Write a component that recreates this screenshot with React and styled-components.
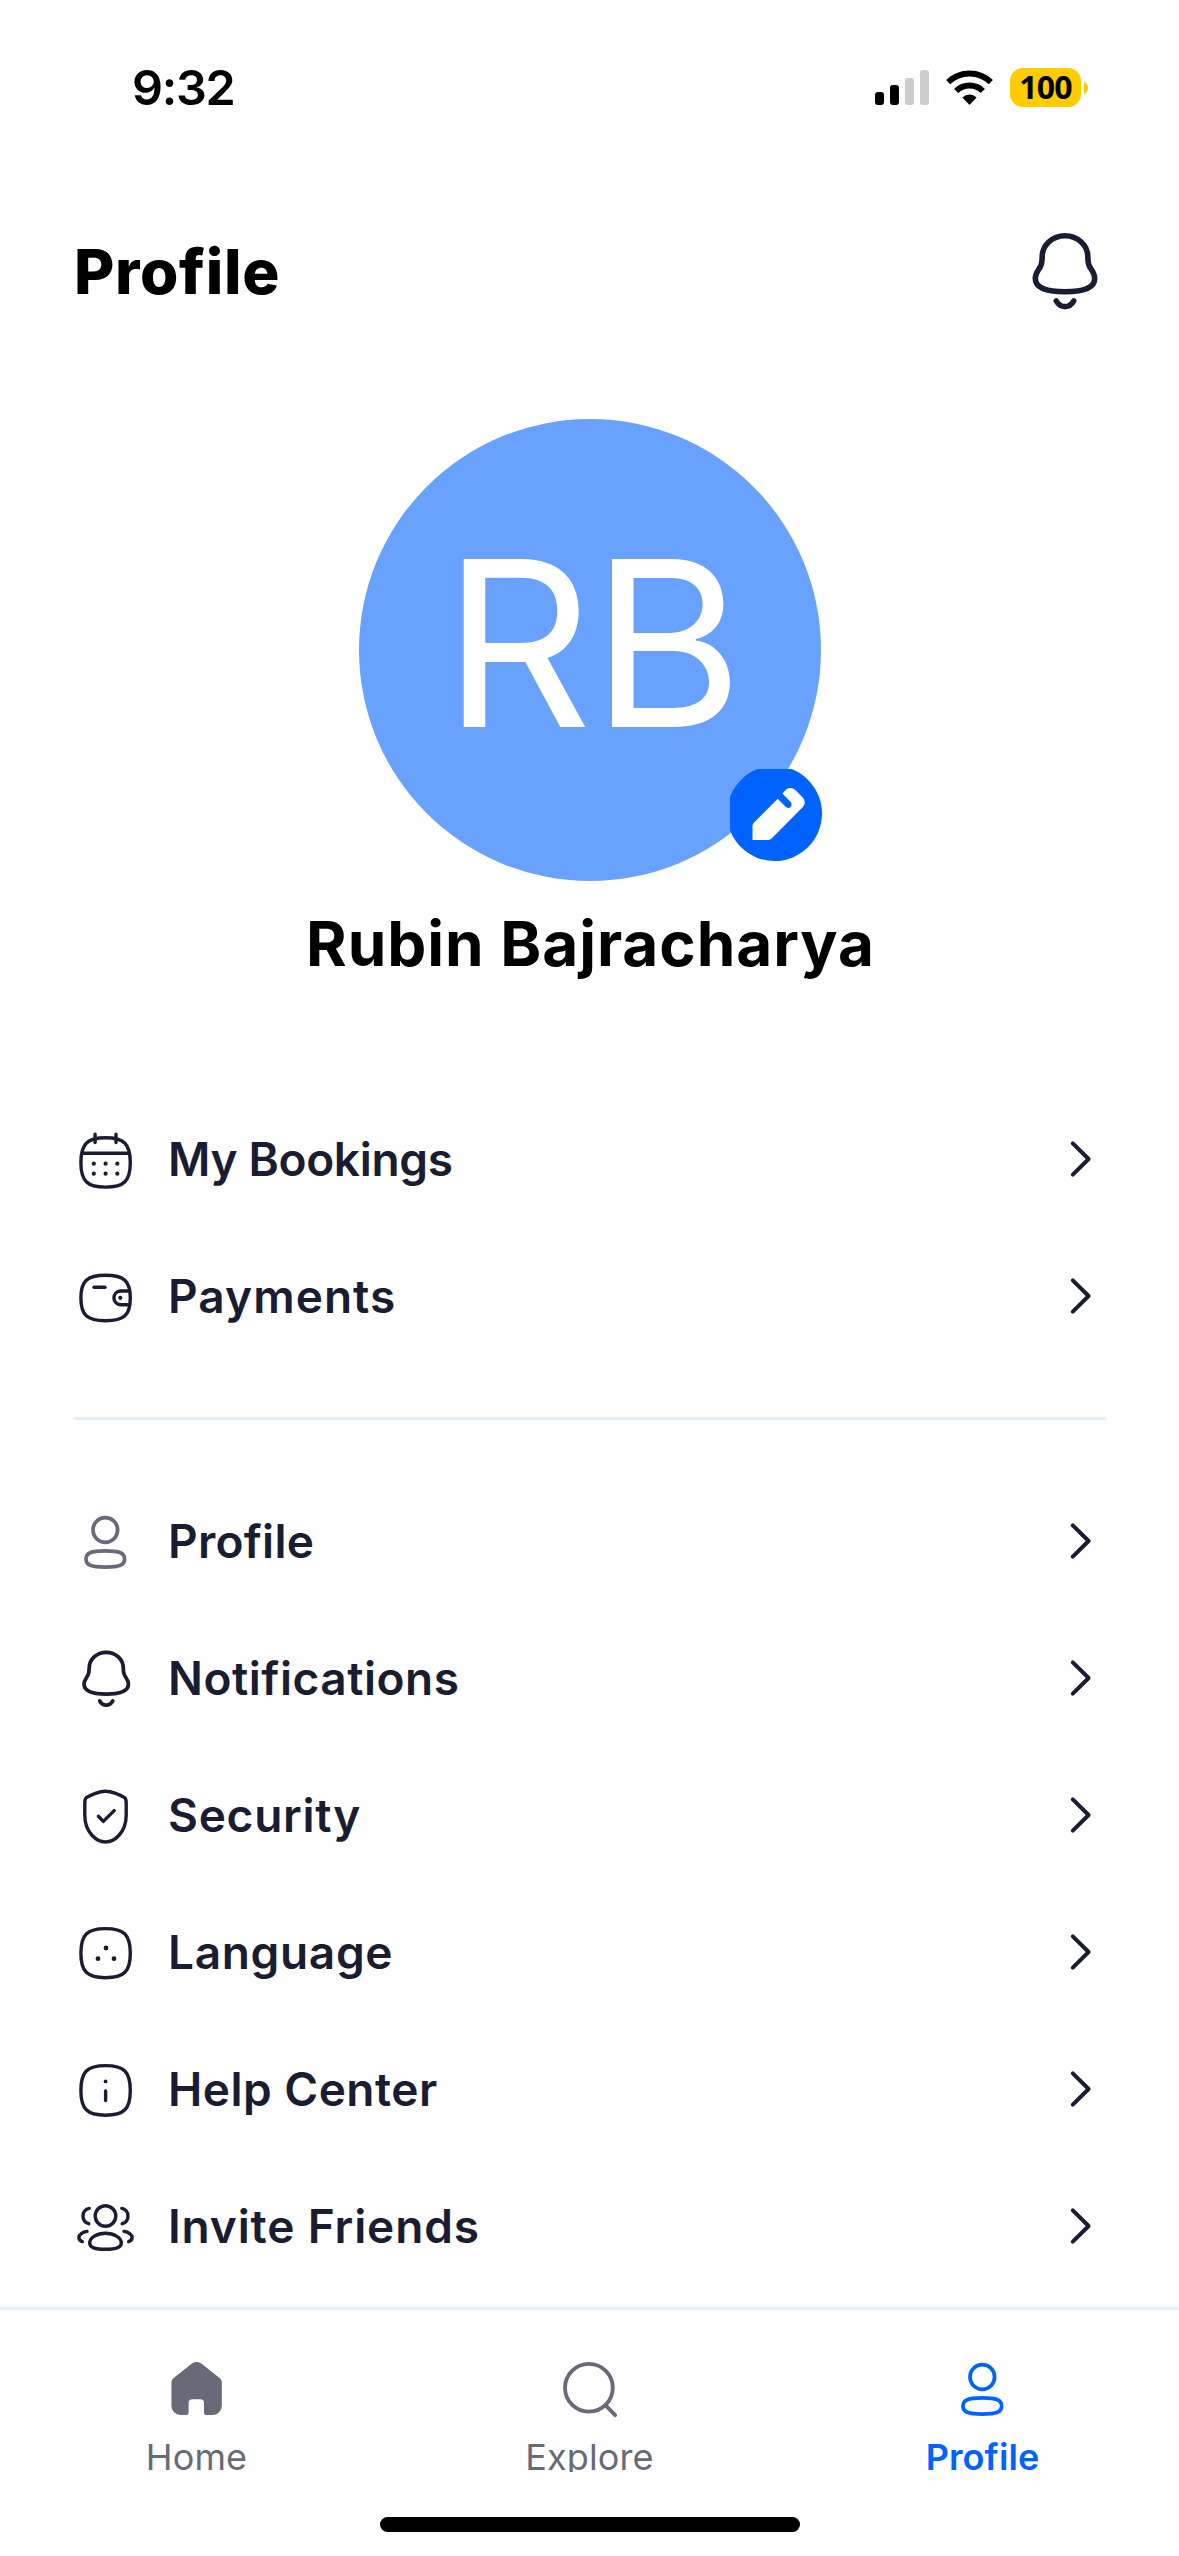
import React from "react";
import styled, { createGlobalStyle } from "styled-components";

const INK = "#1a1d32";
const MUTED = "#686a78";
const BLUE = "#0062ff";
const LINE = "#e3eefd";

const GlobalStyle = createGlobalStyle`
  *, *::before, *::after { box-sizing: border-box; }
  body { margin: 0; background: #fff; }
  svg { display: block; flex: none; }
`;

const Screen = styled.div`
  display: flex;
  flex-direction: column;
  width: 1179px;
  height: 2556px;
  overflow: hidden;
  background: #fefefe;
  font-family: Inter, "Liberation Sans", sans-serif;
  color: ${INK};
`;

const StatusBar = styled.div`
  display: flex;
  align-items: center;
  justify-content: space-between;
  flex: none;
  height: 175px;
  padding: 0 91px 0 132px;
  color: #000;
`;

const Time = styled.div`
  font-size: 48.5px;
  font-weight: 600;
  line-height: 60px;
  letter-spacing: -1.3px;
`;

const StatusIcons = styled.div`
  display: flex;
  align-items: center;
  gap: 17px;
`;

const Signal = styled.div`
  display: flex;
  align-items: flex-end;
  gap: 6px;
  height: 35px;
`;

const SignalBar = styled.span`
  width: 9px;
  height: ${(p) => p.$height}px;
  border-radius: 3px;
  background: ${(p) => (p.$on ? "#000" : "#ccc")};
`;

const Battery = styled.div`
  display: flex;
  align-items: center;
  gap: 3px;
`;

const BatteryLevel = styled.div`
  width: 71px;
  height: 39px;
  border-radius: 13px;
  background: #ffcc00;
  text-align: center;
  font-family: "Open Sans", sans-serif;
  font-size: 32px;
  font-weight: 700;
  line-height: 38px;
  letter-spacing: -0.8px;
`;

const Header = styled.header`
  display: flex;
  align-items: center;
  justify-content: space-between;
  flex: none;
  height: 194px;
  padding: 0 74px;
`;

const Title = styled.h1`
  margin: 0;
  font-size: 62px;
  font-weight: 800;
  line-height: 74px;
  letter-spacing: 0.65px;
  color: #000;
`;

const ProfileSummary = styled.section`
  display: flex;
  flex-direction: column;
  align-items: center;
  gap: 28px;
  padding: 50px 0 112px;
`;

const AvatarFrame = styled.div`
  position: relative;
  width: 462px;
  height: 462px;
`;

const Avatar = styled.div`
  display: flex;
  align-items: center;
  justify-content: center;
  width: 100%;
  height: 100%;
  padding: 0 0 14px 7px;
  border-radius: 50%;
  background: #69a1ff;
  color: #fff;
  font-size: 231px;
  font-weight: 400;
  letter-spacing: -0.5px;
`;

const EditBadge = styled.div`
  position: absolute;
  left: 371px;
  top: 350px;
`;

const Name = styled.h2`
  margin: 0;
  padding-left: 2px;
  font-size: 62px;
  font-weight: 700;
  line-height: 70px;
  letter-spacing: 0.95px;
  color: #000;
`;

const MenuGroup = styled.ul`
  list-style: none;
  margin: 0;
  padding: 0 73px 0 75px;
`;

const MenuRow = styled.li`
  display: flex;
  align-items: center;
  gap: 32px;
  height: 137px;
`;

const MenuLabel = styled.span`
  flex: 1;
  font-size: 46px;
  font-weight: 600;
  line-height: 57px;
  letter-spacing: ${(p) => p.$tracking}px;
`;

const Divider = styled.hr`
  flex: none;
  width: 1032px;
  height: 3px;
  margin: 52px 0 53px 74px;
  border: 0;
  background: ${LINE};
`;

const BottomBar = styled.footer`
  display: flex;
  flex-direction: column;
  align-items: center;
  gap: 37px;
  margin-top: 12px;
  border-top: 3px solid ${LINE};
  padding-top: 48px;
`;

const Tabs = styled.nav`
  display: grid;
  grid-template-columns: repeat(3, 1fr);
  width: 100%;
`;

const Tab = styled.div`
  display: flex;
  flex-direction: column;
  align-items: center;
  gap: 15px;
  color: ${(p) => (p.$active ? BLUE : MUTED)};
`;

const TabLabel = styled.span`
  clip-path: inset(0 0 8px 0);
  font-size: 36px;
  font-weight: ${(p) => (p.$active ? 600 : 400)};
  line-height: 46px;
  letter-spacing: 0.1px;
`;

const HomeIndicator = styled.div`
  width: 420px;
  height: 15px;
  border-radius: 8px;
  background: #000;
`;

const Icon = ({ children, stroke = 3.4, color = "currentColor" }) => (
  <svg
    width="61"
    height="61"
    viewBox="0 0 61 61"
    fill="none"
    stroke={color}
    strokeWidth={stroke}
    strokeLinecap="round"
    strokeLinejoin="round"
  >
    {children}
  </svg>
);

const Dot = ({ x, y, r = 2.1 }) => <circle cx={x} cy={y} r={r} fill="currentColor" stroke="none" />;

// Rounded outline whose four quarters bulge towards the corners of its box.
const squircle = (x0, y0, x1, y1, k = 0.75) => {
  const cx = (x0 + x1) / 2;
  const cy = (y0 + y1) / 2;
  const hx = ((x1 - x0) / 2) * k;
  const hy = ((y1 - y0) / 2) * k;
  return `M${x0} ${cy}C${x0} ${cy - hy} ${cx - hx} ${y0} ${cx} ${y0}S${x1} ${cy - hy} ${x1} ${cy}S${cx + hx} ${y1} ${cx} ${y1}S${x0} ${cy + hy} ${x0} ${cy}Z`;
};

const BELL =
  "M40 10.7C27 10.7 17.3 20.5 17.2 31.5C17.2 37 17.2 38.5 15.2 42C12.8 46 10.3 48.2 10.3 53.5C10.3 62.5 20 66.7 40 66.7S69.7 62.5 69.7 53.5C69.7 48.2 67.2 46 64.8 42C62.8 38.5 62.8 37 62.8 31.5C62.7 20.5 53 10.7 40 10.7Z";
const CLAPPER = "M31.3 76C33.5 80 37 81.6 40 81.6S46.5 80 48.7 76";

const HeaderBell = () => (
  <svg width="80" height="94" viewBox="0 0 80 94" fill="none" stroke={INK} strokeWidth="5.6" strokeLinecap="round">
    <path d={BELL} />
    <path d={CLAPPER} />
  </svg>
);

const BellIcon = () => (
  <Icon stroke={5.1}>
    <g transform="translate(1.4 -3.7) scale(0.746)">
      <path d={BELL} />
      <path d={CLAPPER} />
    </g>
  </Icon>
);

const CalendarIcon = () => (
  <Icon>
    <path d={squircle(5.9, 8.8, 55.3, 58.1)} />
    <path d="M8 24.2H53.5" />
    <path d="M20.1 5.3V13.5M41 5.3V13.5" />
    {[18.8, 30.6, 42.3].map((x) => (
      <React.Fragment key={x}>
        <Dot x={x} y={34.7} />
        <Dot x={x} y={44.7} />
      </React.Fragment>
    ))}
  </Icon>
);

const WalletIcon = () => (
  <Icon>
    <path d={squircle(5.9, 9.2, 55.3, 54.8)} />
    <path d="M19 21.3H30" />
    <path d="M54.6 25H45A6.9 6.9 0 0 0 45 38.7H54.6" />
    <Dot x={45.3} y={31.8} />
  </Icon>
);

const PersonIcon = ({ color }) => (
  <Icon color={color} stroke={3.7}>
    <circle cx="30.3" cy="19" r="12.3" />
    <path d={squircle(11, 39.9, 49.6, 56.1)} />
  </Icon>
);

const ShieldIcon = () => (
  <Icon>
    <path d="M30.5 6.3C24.5 6.3 16 9.7 11.4 12.7C9.8 13.8 9.8 15.5 9.8 18V30C9.8 48 22 57 30.5 57S51.2 48 51.2 30V18C51.2 15.5 51.2 13.8 49.6 12.7C45 9.7 36.5 6.3 30.5 6.3Z" />
    <path d="M23.4 31.3L28.3 36.4L39.2 25.6" />
  </Icon>
);

const LanguageIcon = () => (
  <Icon>
    <path d={squircle(5.9, 6.6, 55.3, 55.7)} />
    <Dot x={31} y={26} r={2.4} />
    <Dot x={23} y={36.7} r={2.4} />
    <Dot x={39} y={36.7} r={2.4} />
  </Icon>
);

const InfoIcon = () => (
  <Icon>
    <path d={squircle(5.9, 6.6, 55.3, 56.2)} />
    <Dot x={30.6} y={22.4} r={1.9} />
    <path d="M30.6 32V41.6" />
  </Icon>
);

const FriendsIcon = () => (
  <Icon>
    <circle cx="30.5" cy="20" r="10.3" />
    <path d="M30.5 37.2C39 37.2 46.3 41.7 46.3 47C46.3 51.6 41 53.3 30.5 53.3S14.7 51.6 14.7 47C14.7 41.7 22 37.2 30.5 37.2Z" />
    <path d="M14.2 12.4C10.8 13 8 16 8 20S10.6 26.8 13.8 27.7" />
    <path d="M46.8 12.4C50.2 13 53 16 53 20S50.4 26.8 47.2 27.7" />
    <path d="M12 35.4C7.5 36 3.9 38.5 3.9 41.5C3.9 43.7 5.3 44.9 7.3 45.6" />
    <path d="M49 35.4C53.5 36 57.1 38.5 57.1 41.5C57.1 43.7 55.7 44.9 53.7 45.6" />
  </Icon>
);

const ChevronIcon = () => (
  <Icon stroke={4}>
    <path d="M27.8 14.4L43.6 30L27.8 45.6" />
  </Icon>
);

const HomeIcon = () => (
  <Icon>
    <path
      fill="currentColor"
      stroke="none"
      d="M25.9 5.6C28.6 3.4 32.6 3.4 35.3 5.6L53.3 19.8C55 21.2 55.8 22.6 55.8 24.6V48A9 9 0 0 1 46.8 57H40.5A2.5 2.5 0 0 1 38 54.5V45A3.7 3.7 0 0 0 34.3 41.3H26.3A3.7 3.7 0 0 0 22.6 45V54.5A2.5 2.5 0 0 1 20.1 57H14.4A9 9 0 0 1 5.4 48V24.6C5.4 22.6 6.2 21.2 7.9 19.8Z"
    />
  </Icon>
);

const SearchIcon = () => (
  <Icon stroke={3.8}>
    <circle cx="29.9" cy="29.8" r="23.9" />
    <path d="M46.6 47.4L56.2 57.2" />
  </Icon>
);

const WifiIcon = () => (
  <svg width="47" height="35" viewBox="0 0 47 35" fill="none" stroke="#000" strokeWidth="6">
    <path d="M2.2 12.2A30.5 30.5 0 0 1 44.8 12.2" />
    <path d="M10.2 21A18.8 18.8 0 0 1 36.8 21" />
    <path fill="#000" stroke="none" d="M16.4 27.4A10.4 10.4 0 0 1 30.6 27.4L24.2 34.3Q23.5 35 22.8 34.3Z" />
  </svg>
);

const BatteryNub = () => (
  <svg width="4" height="12" viewBox="0 0 4 12">
    <path d="M0 0C2.4 1.2 4 3.4 4 6S2.4 10.8 0 12Z" fill="#ffcc00" />
  </svg>
);

const PencilBadge = () => (
  <svg width="92" height="92" viewBox="0 0 92 92">
    <circle cx="44.5" cy="44.5" r="47.5" fill={BLUE} />
    <path
      fill="#fff"
      d="M47.7 29.7L24.6 53C23 54.6 22.5 55.6 22.5 57.5V71H37C39.5 71 40.6 70.5 42.1 69L72.4 38.4C75.5 35.2 75.5 31.6 72.4 28.2L66.4 22C63 18.4 58.6 18 55.4 21.3L52.4 24.5L60.2 32.4C63.8 36.2 59.4 41.6 55.4 37.6Z"
    />
  </svg>
);

const accountItems = [
  { label: "My Bookings", icon: <CalendarIcon />, tracking: -0.33 },
  { label: "Payments", icon: <WalletIcon />, tracking: 1.06 },
];

const settingsItems = [
  { label: "Profile", icon: <PersonIcon color={MUTED} />, tracking: 0.26 },
  { label: "Notifications", icon: <BellIcon />, tracking: 0.52 },
  { label: "Security", icon: <ShieldIcon />, tracking: 0.75 },
  { label: "Language", icon: <LanguageIcon />, tracking: 0.66 },
  { label: "Help Center", icon: <InfoIcon />, tracking: 0.49 },
  { label: "Invite Friends", icon: <FriendsIcon />, tracking: 0.86 },
];

const tabs = [
  { label: "Home", icon: <HomeIcon /> },
  { label: "Explore", icon: <SearchIcon /> },
  { label: "Profile", icon: <PersonIcon />, active: true },
];

const Menu = ({ items }) => (
  <MenuGroup>
    {items.map((item) => (
      <MenuRow key={item.label}>
        {item.icon}
        <MenuLabel $tracking={item.tracking}>{item.label}</MenuLabel>
        <ChevronIcon />
      </MenuRow>
    ))}
  </MenuGroup>
);

export default function App() {
  return (
    <>
      <GlobalStyle />
      <Screen>
        <StatusBar>
          <Time>9:32</Time>
          <StatusIcons>
            <Signal>
              <SignalBar $height={13} $on />
              <SignalBar $height={20} $on />
              <SignalBar $height={27} />
              <SignalBar $height={35} />
            </Signal>
            <WifiIcon />
            <Battery>
              <BatteryLevel>100</BatteryLevel>
              <BatteryNub />
            </Battery>
          </StatusIcons>
        </StatusBar>
        <Header>
          <Title>Profile</Title>
          <HeaderBell />
        </Header>
        <ProfileSummary>
          <AvatarFrame>
            <Avatar>RB</Avatar>
            <EditBadge>
              <PencilBadge />
            </EditBadge>
          </AvatarFrame>
          <Name>Rubin Bajracharya</Name>
        </ProfileSummary>
        <Menu items={accountItems} />
        <Divider />
        <Menu items={settingsItems} />
        <BottomBar>
          <Tabs>
            {tabs.map((tab) => (
              <Tab key={tab.label} $active={tab.active}>
                {tab.icon}
                <TabLabel $active={tab.active}>{tab.label}</TabLabel>
              </Tab>
            ))}
          </Tabs>
          <HomeIndicator />
        </BottomBar>
      </Screen>
    </>
  );
}
